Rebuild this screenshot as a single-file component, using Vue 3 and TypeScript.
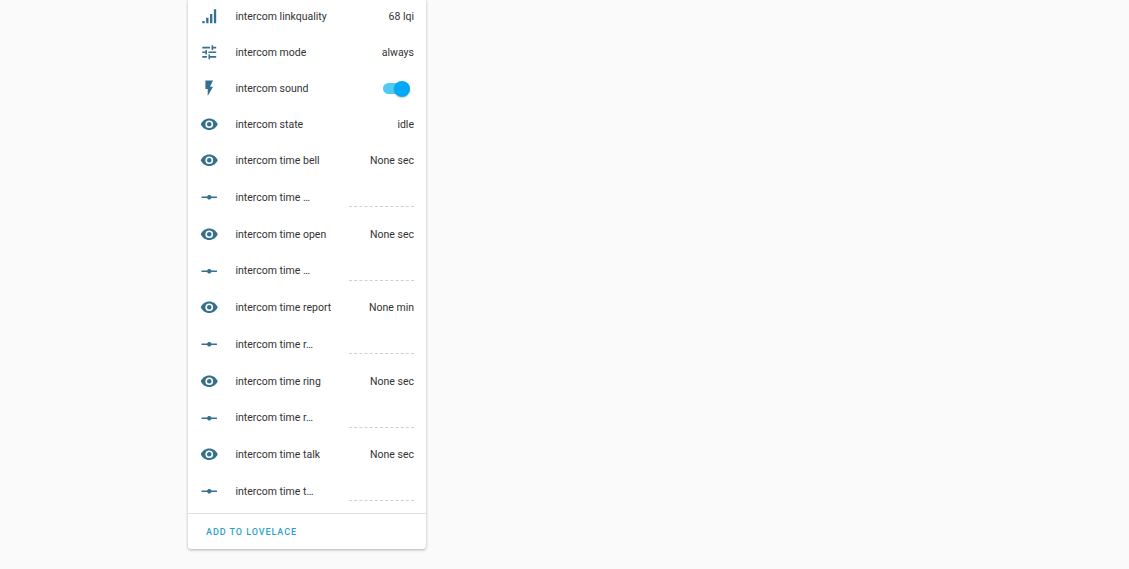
<template>
  <div class="page">
    <div class="card">
      <div class="states">
        <div v-for="(row, i) in rows" :key="i" class="row" :class="{ 'row-input': row.input }">
          <svg class="icon" viewBox="0 0 24 24"><path :d="row.icon" /></svg>
          <span class="name">{{ row.name }}</span>
          <span v-if="row.input" class="field"></span>
          <span v-else-if="row.toggle" class="toggle"><span class="knob"></span></span>
          <span v-else class="value">{{ row.value }}</span>
        </div>
      </div>
      <div class="actions">
        <span class="add">ADD TO LOVELACE</span>
      </div>
    </div>
  </div>
</template>

<script setup lang="ts">
interface Row {
  name: string
  icon: string
  value?: string
  input?: boolean
  toggle?: boolean
}

// mdi icons
const signal = 'M3,21H6V18H3M8,21H11V14H8M13,21H16V9H13M18,21H21V3H18V21Z'
const tune =
  'M3,17V19H9V17H3M3,5V7H13V5H3M13,21V19H21V17H13V15H11V21H13M7,9V11H3V13H7V15H9V9H7M21,13V11H11V13H21M15,9H17V7H21V5H17V3H15V9Z'
const flash = 'M7,2V13H10V22L17,10H13L17,2H7Z'
const eye =
  'M12,9A3,3 0 0,0 9,12A3,3 0 0,0 12,15A3,3 0 0,0 15,12A3,3 0 0,0 12,9M12,17A5,5 0 0,1 7,12A5,5 0 0,1 12,7A5,5 0 0,1 17,12A5,5 0 0,1 12,17M12,4.5C7,4.5 2.73,7.61 1,12C2.73,16.39 7,19.5 12,19.5C17,19.5 21.27,16.39 23,12C21.27,7.61 17,4.5 12,4.5Z'
const vertex =
  'M2,11H9.17C9.58,9.83 10.69,9 12,9C13.31,9 14.42,9.83 14.83,11H22V13H14.83C14.42,14.17 13.31,15 12,15C10.69,15 9.58,14.17 9.17,13H2V11Z'

const rows: Row[] = [
  { name: 'intercom linkquality', icon: signal, value: '68 lqi' },
  { name: 'intercom mode', icon: tune, value: 'always' },
  { name: 'intercom sound', icon: flash, toggle: true },
  { name: 'intercom state', icon: eye, value: 'idle' },
  { name: 'intercom time bell', icon: eye, value: 'None sec' },
  { name: 'intercom time …', icon: vertex, input: true },
  { name: 'intercom time open', icon: eye, value: 'None sec' },
  { name: 'intercom time …', icon: vertex, input: true },
  { name: 'intercom time report', icon: eye, value: 'None min' },
  { name: 'intercom time r…', icon: vertex, input: true },
  { name: 'intercom time ring', icon: eye, value: 'None sec' },
  { name: 'intercom time r…', icon: vertex, input: true },
  { name: 'intercom time talk', icon: eye, value: 'None sec' },
  { name: 'intercom time t…', icon: vertex, input: true },
]
</script>

<style>
body {
  background: #fafafa;
}
</style>

<style scoped>
.page {
  height: 569px;
  overflow: hidden;
  display: flex;
  flex-direction: column;
  justify-content: flex-end;
  padding-bottom: 20px;
  padding-left: 188px;
  box-sizing: border-box;
  font-family: Roboto, sans-serif;
  background: #fafafa;
}

.card {
  flex: none;
  width: 238px;
  background: #fff;
  border-radius: 3px;
  box-shadow: 0 1px 3px rgba(0, 0, 0, 0.3);
}

.states {
  padding: 0 12px 3px 12px;
}

.row {
  display: flex;
  align-items: center;
  height: 36px;
}

.row-input {
  height: 37.46px;
}

.icon {
  flex: none;
  width: 18.5px;
  height: 18.5px;
  fill: #36708f;
}

.name {
  flex: 1;
  margin-left: 17px;
  font-size: 10.5px;
  color: #333;
  white-space: nowrap;
}

.value {
  font-size: 10.5px;
  color: #333;
  white-space: nowrap;
}

.field {
  align-self: flex-end;
  width: 65px;
  height: 8px;
  margin-bottom: 9px;
  border-bottom: 1px dashed #cfcfcf;
}

.toggle {
  position: relative;
  width: 27px;
  height: 11px;
  margin-right: 4px;
  border-radius: 6px;
  background: #4fcbf3;
}

.knob {
  position: absolute;
  right: 0;
  top: -2.5px;
  width: 16px;
  height: 16px;
  border-radius: 50%;
  background: #03a9f4;
  box-shadow: 0 1px 2px rgba(0, 0, 0, 0.2);
}

.actions {
  height: 36px;
  box-sizing: border-box;
  display: flex;
  align-items: center;
  padding-left: 18px;
  border-top: 1px solid #e0e0e0;
}

.add {
  font-size: 9px;
  font-weight: 500;
  letter-spacing: 0.94px;
  color: #2d9fd0;
}
</style>
